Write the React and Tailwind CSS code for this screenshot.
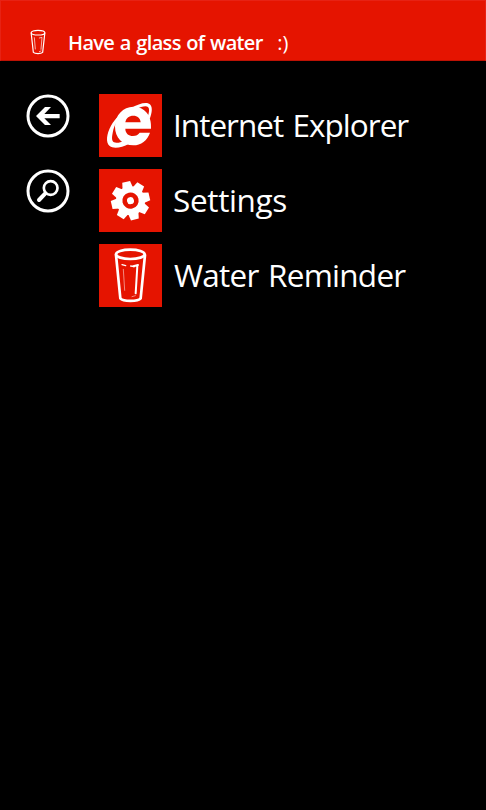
const BackIcon = () => (
  <svg viewBox="0 0 132 132" className="block size-11" fill="none">
    <circle cx="66" cy="66" r="60" stroke="white" strokeWidth="9" />
    <path
      d="M30 66 L57 39 H75 L55 60 H101 V73 H55 L75 93 H57 Z"
      fill="white"
    />
  </svg>
);

const SearchIcon = () => (
  <svg viewBox="0 0 132 132" className="block size-11" fill="none" stroke="white">
    <circle cx="66" cy="66" r="60" strokeWidth="9" />
    <circle cx="74" cy="57" r="20.5" strokeWidth="8" />
    <path d="M58 73 L39 93" strokeWidth="12" strokeLinecap="round" />
  </svg>
);

const ExplorerIcon = () => (
  <svg viewBox="0 0 189 189" className="block size-full" fill="white">
    <path
      fillRule="evenodd"
      d="M156 104 H79 C79 118 89 126 102 126 C111 126 118 122 122 116 H153 C145 140 126 154 103 154 C71 154 48 131 48 98 C48 63 73 38 103 38 C137 38 159 64 156 104 Z M79 85 H125 C124 72 115 65 103 65 C90 65 81 72 79 85 Z"
    />
    <path d="M96 43 C120 27 146 22 154 32 C161 41 159 56 152 75 L146 68 C151 54 152 44 147 39 C141 34 126 38 111 46 Z" />
    <path d="M92 43 C66 58 45 90 41 117 C38 131 38 141 45 145 C53 149 68 144 82 137 L90 149 C68 161 44 165 32 156 C19 145 23 119 36 95 C48 74 68 54 92 43 Z" />
  </svg>
);

const TEETH = [0, 45, 90, 135, 180, 225, 270, 315];

const SettingsIcon = () => (
  <svg viewBox="0 0 189 189" className="block size-full" fill="white">
    <g transform="translate(94.5 95) rotate(-13)">
      {TEETH.map((angle) => (
        <path key={angle} d="M36 -16 L58 -12 V12 L36 16 Z" transform={`rotate(${angle})`} />
      ))}
      <circle r="34" fill="none" stroke="white" strokeWidth="19" />
      <circle r="10.5" />
    </g>
  </svg>
);

const GlassIcon = () => (
  <svg
    viewBox="-2 0 189 189"
    className="block size-full"
    fill="none"
    stroke="white"
    strokeLinecap="round"
  >
    <ellipse cx="92" cy="31" rx="43" ry="14" strokeWidth="8" />
    <path d="M49 33 L62 163 C70 173 115 173 123 163 L136 33" strokeWidth="8" />
    <path d="M67 62 L78 65 M93 66 L104 68" strokeWidth="4" />
    <path d="M101 67 L115 63 M113 66 L108 148" strokeWidth="6" />
    <path d="M71 76 L75 139 M97 158 L107 155" strokeWidth="1.5" />
  </svg>
);

// thinner version of the glass, used in the toast
const ToastGlass = () => (
  <svg
    viewBox="0 0 48 78"
    className="block h-[26px] w-4"
    fill="none"
    stroke="white"
    strokeLinecap="round"
  >
    <ellipse cx="24" cy="11" rx="20.5" ry="7" strokeWidth="3.6" />
    <path d="M3.5 12 L10 70 C15 75 33 75 38 70 L44.5 12" strokeWidth="3.6" />
    <path d="M13 26 L16 60 M28 27 L36 25 L33 61 M28 68 L33 66" strokeWidth="2" />
  </svg>
);

const apps = [
  { name: "Internet Explorer", icon: <ExplorerIcon />, text: "pl-[11px] tracking-[-0.98px]" },
  { name: "Settings", icon: <SettingsIcon />, text: "pl-[11px] tracking-[-0.35px]" },
  { name: "Water Reminder", icon: <GlassIcon />, text: "pl-[12px] tracking-[-0.75px]" },
];

const Toast = () => (
  <header className="flex h-[61px] items-end border border-b-[#bd1204] border-[#e72214] bg-[#e51400] pl-[29px]">
    <div className="pb-[5px]">
      <ToastGlass />
    </div>
    <p className="flex gap-[14.5px] pb-[3px] pl-[22px] text-[20px] leading-7 whitespace-nowrap">
      <span className="font-semibold tracking-[-0.65px] [word-spacing:1px]">
        Have a glass of water
      </span>
      <span>:)</span>
    </p>
  </header>
);

const App = () => {
  return (
    <div className="flex h-[810px] w-[486px] flex-col overflow-hidden bg-black font-['Open_Sans','Noto_Sans',sans-serif] text-white">
      <Toast />
      <main className="flex pt-[33px] pl-[26px]">
        <nav className="flex w-[73px] flex-col gap-[31px]">
          <button className="w-11">
            <BackIcon />
          </button>
          <button className="w-11">
            <SearchIcon />
          </button>
        </nav>
        <ul className="flex flex-col gap-3">
          {apps.map((app) => (
            <li key={app.name} className="flex items-center">
              <div className="size-[63px] bg-[#e51400]">{app.icon}</div>
              <span
                className={`pb-[2px] text-[31.5px] leading-10 whitespace-nowrap [word-spacing:2px] ${app.text}`}
              >
                {app.name}
              </span>
            </li>
          ))}
        </ul>
      </main>
    </div>
  );
};

export default App;
